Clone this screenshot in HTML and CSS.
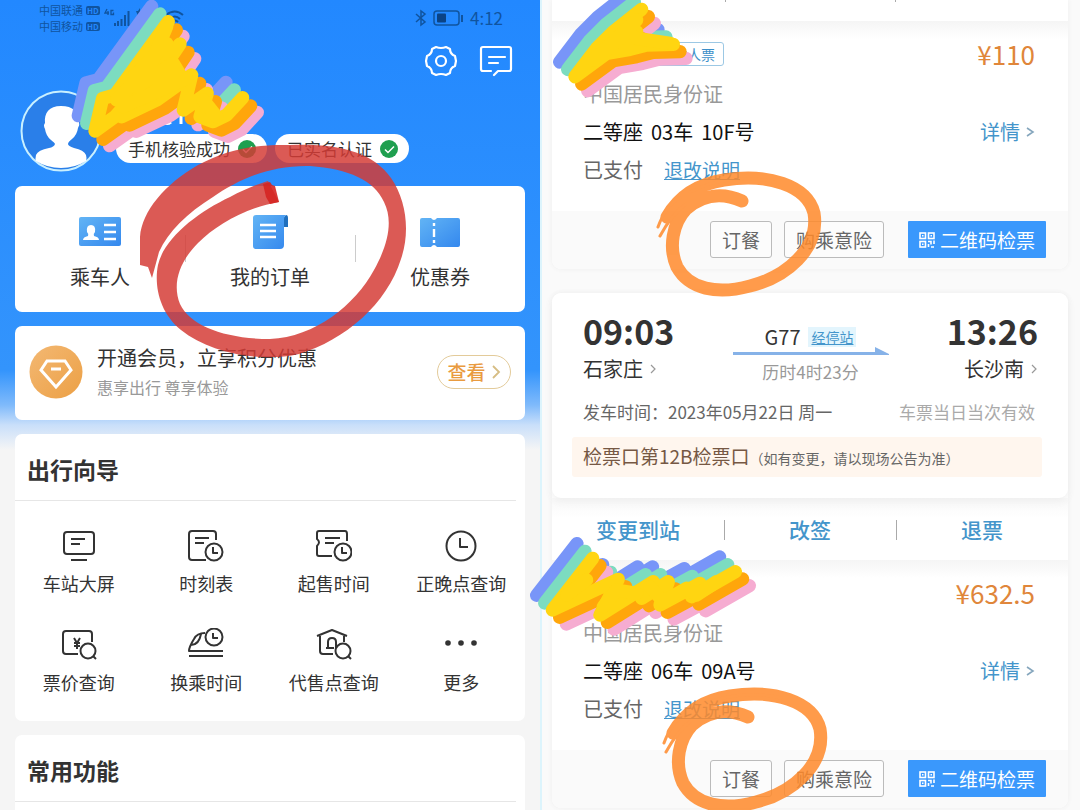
FILE: index.html
```html
<!DOCTYPE html>
<html lang="zh-CN">
<head>
<meta charset="utf-8">
<meta name="viewport" content="width=device-width, initial-scale=1">
<title>铁路订单订餐指引</title>
<link rel="stylesheet" href="styles.css">
</head>
<body>
<div class="page">
  <main class="account">
    <div class="status">
      <div class="carriers">
        <span>中国联通<b class="hd">HD</b></span>
        <span>中国移动<b class="hd">HD</b></span>
      </div>
      <svg class="signal" width="80" height="24" viewBox="0 0 80 24" aria-hidden="true">
        <g fill="none" stroke="#10549f" stroke-width="1.3"><path d="M3 7L1 11h4M4 9v4M9.500 8.500H7v4h2.500V10.500"/></g>
        <g fill="#10549f"><path d="M10 21h2v3h-2zM13 19h2v5h-2zM16.500 17h2v7h-2zM20 13h2v11h-2zM23.500 9h2v15h-2zM32 9h2l2-3v8h-2z"/></g>
        <g fill="none" stroke="#10549f" stroke-width="2"><path d="M62 13q9-7 17 0M65 17q6-5 11 0M68 20q3-3 6 0"/></g>
      </svg>
      <div class="status-right">
        <svg width="12" height="18" viewBox="0 0 12 18" aria-hidden="true"><path d="M1 5l9 8-4 3V2l4 3-9 8" fill="none" stroke="#10549f" stroke-width="1.500"/></svg>
        <svg width="31" height="18" viewBox="0 0 31 18" aria-hidden="true"><rect x="1" y="2" width="25" height="14" rx="3" fill="none" stroke="#10549f" stroke-width="1.500"/><rect x="4" y="4.500" width="9" height="9" rx="1" fill="#0b4385"/><path d="M29 6v7" stroke="#10549f" stroke-width="2"/></svg>
        <span>4:12</span>
      </div>
    </div>
    <div class="tools">
      <button class="plain" aria-label="设置">
        <svg width="32" height="32" viewBox="0 0 32 32"><g fill="none" stroke="#fff" stroke-width="2.200" stroke-linejoin="round"><path d="M11 2q5 2 10 0l4 2q0 5 5 7l1 5-1 5q-5 2-5 7l-4 2q-5-2-10 0l-4-2q0-5-5-7l-1-5 1-5q5-2 5-7z"/><circle cx="16" cy="16" r="5"/></g></svg>
      </button>
      <button class="plain" aria-label="消息">
        <svg width="34" height="32" viewBox="0 0 34 32"><g fill="none" stroke="#fff" stroke-width="2.200" stroke-linecap="round" stroke-linejoin="round"><path d="M12 26H4q-2 0-2-2V4q0-2 2-2h26q2 0 2 2v20q0 2-2 2H19l-4 4M10 12h16M10 18h9"/></g></svg>
      </button>
    </div>
    <div class="profile">
      <svg class="avatar" viewBox="0 0 82 82" role="img" aria-label="头像">
        <circle cx="41" cy="41" r="39.500" fill="#2a7fe9" stroke="#c9f0ff" stroke-width="2"/>
        <path d="M41 16c-12 0-17 7-16 17q-2 2 0 6 1 7 6 11 4 3 4 4-1 3-6 4-11 2-13 7-1 4 0 6Q27 78 41 78t25-7q1-3 0-6-2-5-12-7-6-2-6-4t4-5q5-4 6-11 2-3 1-6c0-10-6-16-18-16z" fill="#fff"/>
      </svg>
      <div class="identity">
        <svg width="34" height="12" viewBox="0 0 34 12" aria-hidden="true"><path d="M4 0q2 8-3 10M10 8q4 3 8 0M28 2v8" fill="none" stroke="#fff" stroke-width="3"/></svg>
        <div class="badges">
          <span class="badge">手机核验成功<svg width="18" height="18" viewBox="0 0 18 18"><circle cx="9" cy="9" r="9" fill="#1f9f4f"/><path d="M5 9.500l3 3 6-6" fill="none" stroke="#fff" stroke-width="1.500"/></svg></span>
          <span class="badge">已实名认证<svg width="18" height="18" viewBox="0 0 18 18"><circle cx="9" cy="9" r="9" fill="#1f9f4f"/><path d="M5 9.500l3 3 6-6" fill="none" stroke="#fff" stroke-width="1.500"/></svg></span>
        </div>
      </div>
    </div>

    <nav class="card quick">
      <a href="#passengers">
        <svg width="44" height="34" viewBox="0 0 44 34"><rect x="1" y="2" width="42" height="29" rx="2" fill="url(#blue)"/><path d="M5 25q0-3 5-4 1-2-1-4-1-7 4-7t4 7q-2 2-1 4 5 1 5 4z" fill="#fff"/><path d="M26 10h12M26 17h12M26 24h12" stroke="#fff" stroke-width="2.400"/></svg>
        <span>乘车人</span>
      </a>
      <a href="#orders">
        <svg width="38" height="34" viewBox="0 0 38 34"><path d="M35 0q2 0 2 3v9h-5V3z" fill="#1f6fbd"/><path d="M5 0h30q-2 1-2 4v26q0 4-4 4H5q-3 0-3-3V3q0-3 3-3z" fill="url(#blue)"/><path d="M9 10h16M9 16h16M9 22h16" stroke="#fff" stroke-width="2.400"/></svg>
        <span>我的订单</span>
      </a>
      <a href="#coupons">
        <svg width="42" height="34" viewBox="0 0 42 34"><path d="M3 3h9q3 4 6 0h21q2 0 2 2v25q0 2-2 2H18q-3-4-6 0H3q-2 0-2-2V5q0-2 2-2z" fill="url(#blue)"/><path d="M15 8v20" stroke="#fff" stroke-width="2.400" stroke-dasharray="3 3 8 3"/></svg>
        <span>优惠券</span>
      </a>
    </nav>

    <section class="card member">
      <svg width="54" height="54" viewBox="0 0 54 54" aria-hidden="true"><circle cx="27" cy="27" r="26.500" fill="url(#gold)"/><path d="M18 16h18l6 9-15 17-15-17zM22 24h10" fill="none" stroke="#fff" stroke-width="3"/></svg>
      <div class="member-text">
        <h2>开通会员，立享积分优惠</h2>
        <p>惠享出行 尊享体验</p>
      </div>
      <button class="view">查看<svg width="9" height="14" viewBox="0 0 9 14"><path d="M1 1l6 6-6 6" fill="none" stroke="#d6bd84" stroke-width="1.800"/></svg></button>
    </section>

    <section class="card">
      <h2 class="card-title">出行向导</h2>
      <nav class="guide">
        <a href="#screen"><svg width="36" height="34" viewBox="0 0 36 34"><rect x="3" y="3" width="30" height="22" rx="3"/><path d="M10 10h14M10 15h9M10 31h16"/></svg><span>车站大屏</span></a>
        <a href="#timetable"><svg width="36" height="34" viewBox="0 0 36 34"><path d="M28 11V5q0-3-3-3H4Q1 2 1 5v23q0 3 3 3h14M7 9h14M7 14h9"/><circle cx="26" cy="23" r="8.500"/><path d="M25 18v6h5"/></svg><span>时刻表</span></a>
        <a href="#sale"><svg width="36" height="34" viewBox="0 0 36 34"><path d="M31 12V5q0-3-2-3H3Q1 2 1 4v6q4 3 0 7v8q0 2 2 2h13M9 9h15M9 14h9"/><circle cx="27" cy="23" r="8.500"/><path d="M26 18v6h5"/></svg><span>起售时间</span></a>
        <a href="#delay"><svg width="36" height="34" viewBox="0 0 36 34"><circle cx="18" cy="17" r="14.500"/><path d="M17 9v9h8"/></svg><span>正晚点查询</span></a>
        <a href="#price"><svg width="36" height="34" viewBox="0 0 36 34"><path d="M31 14V6q0-3-3-3H5Q2 3 2 6v17q0 3 3 3h12M13 10l3 5 3-5M16 15v6M13 15h6M13 18h6"/><circle cx="27" cy="23" r="7.500"/><path d="M32 28l3 3"/></svg><span>票价查询</span></a>
        <a href="#transfer"><svg width="36" height="34" viewBox="0 0 36 34"><path d="M17 5Q9 5 6 11q-5 8-5 12h34M1 28h34M3 17q8 0 10-11"/><circle cx="26" cy="9" r="8.500"/><path d="M25 5v5h5"/></svg><span>换乘时间</span></a>
        <a href="#agency"><svg width="36" height="34" viewBox="0 0 36 34"><path d="M1 8l15-6 15 6M4 8v15q0 3 3 3h10M28 8v6M12 20v-6q0-4 4-4t4 4v6M10 20h8"/><circle cx="27" cy="23" r="7.500"/><path d="M32 28l3 3"/></svg><span>代售点查询</span></a>
        <a href="#more"><svg class="dots" width="36" height="34" viewBox="0 0 36 34"><circle cx="5" cy="15" r="2.800"/><circle cx="18" cy="15" r="2.800"/><circle cx="31" cy="15" r="2.800"/></svg><span>更多</span></a>
      </nav>
    </section>

    <section class="card common">
      <h2 class="card-title">常用功能</h2>
    </section>
  </main>

  <section class="orders">
    <article class="order first">
      <div class="sheet tail"><i></i><i></i></div>
      <div class="ticket">
        <div class="row top"><span class="chip">成人票</span><span class="price">¥110</span></div>
        <p class="idtype">中国居民身份证</p>
        <div class="row seat"><span class="place"><span>二等座</span><span>03车</span><span>10F号</span></span><a href="#detail1">详情<svg width="9" height="12" viewBox="0 0 9 12"><path d="M1 2l6 4-6 4" fill="none" stroke="#85a6bd" stroke-width="1.600"/></svg></a></div>
        <p class="paid">已支付<a href="#refund1">退改说明</a></p>
      </div>
      <div class="footer">
        <button class="ghost">订餐</button>
        <button class="ghost">购乘意险</button>
        <button class="solid"><svg width="16" height="16" viewBox="0 0 16 16"><g fill="none" stroke="#fff" stroke-width="1.600"><rect x="1" y="1" width="5.500" height="5.500"/><rect x="9.500" y="1" width="5.500" height="5.500"/><rect x="1" y="9.500" width="5.500" height="5.500"/><path d="M3 3.800h1.500M11.500 3.800H13M3 12.300h1.500M9 9.500h3v3M9.500 12v3M15 8.500V12M12 15h3"/></g></svg>二维码检票</button>
      </div>
    </article>

    <article class="order">
      <div class="sheet trip">
        <div class="journey">
          <div class="stop"><strong>09:03</strong><span>石家庄<svg width="7" height="10" viewBox="0 0 7 10"><path d="M1 1l4 4-4 4" fill="none" stroke="#999" stroke-width="1.200"/></svg></span></div>
          <div class="train">
            <div class="train-no">G77<a href="#stops">经停站</a></div>
            <svg class="arrow" viewBox="0 0 156 10" aria-hidden="true"><path d="M0 5h142V0l14 7v1H0z" fill="#86b2e8"/></svg>
            <span class="duration">历时4时23分</span>
          </div>
          <div class="stop end"><strong>13:26</strong><span>长沙南<svg width="7" height="10" viewBox="0 0 7 10"><path d="M1 1l4 4-4 4" fill="none" stroke="#999" stroke-width="1.200"/></svg></span></div>
        </div>
        <div class="row date"><span>发车时间：2023年05月22日 周一</span><span class="valid">车票当日当次有效</span></div>
        <p class="gate">检票口第12B检票口<small>（如有变更，请以现场公告为准）</small></p>
      </div>
      <div class="actions"><button class="plain">变更到站</button><button class="plain">改签</button><button class="plain">退票</button></div>
      <div class="ticket">
        <div class="row top"><span></span><span class="price">¥632.5</span></div>
        <p class="idtype">中国居民身份证</p>
        <div class="row seat"><span class="place"><span>二等座</span><span>06车</span><span>09A号</span></span><a href="#detail2">详情<svg width="9" height="12" viewBox="0 0 9 12"><path d="M1 2l6 4-6 4" fill="none" stroke="#85a6bd" stroke-width="1.600"/></svg></a></div>
        <p class="paid">已支付<a href="#refund2">退改说明</a></p>
      </div>
      <div class="footer">
        <button class="ghost">订餐</button>
        <button class="ghost">购乘意险</button>
        <button class="solid"><svg width="16" height="16" viewBox="0 0 16 16"><g fill="none" stroke="#fff" stroke-width="1.600"><rect x="1" y="1" width="5.500" height="5.500"/><rect x="9.500" y="1" width="5.500" height="5.500"/><rect x="1" y="9.500" width="5.500" height="5.500"/><path d="M3 3.800h1.500M11.500 3.800H13M3 12.300h1.500M9 9.500h3v3M9.500 12v3M15 8.500V12M12 15h3"/></g></svg>二维码检票</button>
      </div>
    </article>
  </section>

  <!-- hand-drawn marker rings and name-hiding scribbles -->
  <svg class="marks" viewBox="0 0 1080 810" aria-hidden="true">
    <defs>
      <linearGradient id="blue" x1="0" y1="0" x2="1" y2="1"><stop offset="0" stop-color="#62b4f5"/><stop offset="1" stop-color="#3488ee"/></linearGradient>
      <linearGradient id="gold" x1="0" y1="0" x2="1" y2="1"><stop offset="0" stop-color="#f3b873"/><stop offset="1" stop-color="#eca045"/></linearGradient>
      <path id="s1" d="M505 65L345 285 308 295 285 393 345 350 540 132 440 280 365 350 470 300 575 225 550 330 622 280 600 350 640 365 680 345 728 293"/>
      <path id="s2" d="M305 28L220 95 170 145 105 230 200 160 270 148 320 135 400 133M200 160L290 95"/>
      <path id="s3" d="M218 115L97 270 295 178 240 285 400 185 365 235 445 185 420 255 540 190 515 230 646 155"/>
      <g id="ring" fill="none" stroke="#ff8a2b" stroke-linecap="round">
        <path d="M667 217C678 198 697 184 724 180C767 173 807 185 814 213C820 249 786 277 750 286C717 295 689 289 677 267C668 247 673 223 686 209C702 195 722 192 742 201" stroke-width="13"/>
        <path d="M658 227Q666 205 680 198M660 236Q672 214 686 204M690 192Q730 172 775 182" stroke-width="3"/>
      </g>
    </defs>
    <path opacity=".84" fill="#d43a34" d="M140 265V237C142 211 165 184 198 165C228 149 258 144 290 145C338 143 373 152 391 178C407 201 410 233 401 259C387 304 345 340 299 354C260 363 210 353 181 330C159 312 154 285 158 265C164 238 198 212 230 197C245 189 258 184 268 181L279 202C247 207 216 225 198 243C179 262 172 284 180 304C190 326 226 339 270 339C315 337 355 305 374 270C389 243 393 220 384 202C374 180 349 169 310 166C269 165 238 180 213 197C187 213 168 232 159 252L152 278L148 267Z"/>
    <path fill="#d52522" opacity=".9" d="M263 184l7-2 2 3 3 1 4 16-9 2-4-7z"/>
    <g opacity=".85"><use href="#ring"/></g>
    <g opacity=".85"><use href="#ring" x="6" y="516"/></g>
    <g class="scribble" transform="scale(.3333)">
      <use href="#s1" x="-50" y="-46" stroke="#7895f8"/><use href="#s1" x="-25" y="-23" stroke="#7cdcc0"/><use href="#s1" x="44" y="44" stroke="#f6acd1"/><use href="#s1" x="24" y="25" stroke="#ffa60b"/><use href="#s1" stroke="#ffd511"/>
      <path stroke="#ffd511" d="M500 80L450 200 350 300M400 230L500 130M370 320L560 235M410 260L520 190 550 240M450 285L520 230M610 300L650 350"/>
    </g>
    <g class="scribble" transform="translate(540 0) scale(.3333)">
      <use href="#s2" x="-46" y="-44" stroke="#7895f8"/><use href="#s2" x="-22" y="-22" stroke="#7cdcc0"/><use href="#s2" x="38" y="42" stroke="#f6acd1"/><use href="#s2" x="20" y="22" stroke="#ffa60b"/><use href="#s2" stroke="#ffd511"/>
      <path stroke="#ffd511" d="M160 180L290 60M200 150L270 90M290 115L390 130"/>
    </g>
    <g class="scribble" transform="translate(520 520) scale(.3333)">
      <use href="#s3" x="-47" y="-44" stroke="#7895f8"/><use href="#s3" x="-23" y="-21" stroke="#7cdcc0"/><use href="#s3" x="42" y="42" stroke="#f6acd1"/><use href="#s3" x="22" y="22" stroke="#ffa60b"/><use href="#s3" stroke="#ffd511"/>
      <path stroke="#ffd511" d="M140 225L200 180M250 260L290 210 350 220M390 200L430 245 500 205 530 225 590 185"/>
    </g>
  </svg>
</div>
</body>
</html>
```

FILE: styles.css
```css
* { box-sizing: border-box; }
body, h2, p { margin: 0; }
body {
  font-family: "Noto Sans CJK SC", "Noto Sans", sans-serif;
  font-size: 20px;
  line-height: 30px;
  color: #333;
  height: 100vh;
  overflow: hidden;
  background: #f5f5f5;
}
a { color: inherit; text-decoration: none; }
button { font: inherit; cursor: pointer; }
svg { display: block; flex: none; }
.plain { background: none; border: 0; padding: 0; color: inherit; }
.page { position: relative; display: grid; grid-template-columns: 1fr 1fr; }

/* account screen */
.account {
  display: flex;
  flex-direction: column;
  gap: 14px;
  padding: 0 15px;
  background: linear-gradient(#2288ff 0, #3394fc 370px, #7fbafb 405px, #c9dffa 425px, #f5f5f5 450px);
}
.status { display: flex; align-items: flex-start; height: 31px; padding: 2px 22px 0 24px; color: #10549f; }
.carriers { display: flex; flex-direction: column; font-size: 11px; line-height: 16px; }
.carriers span { display: flex; align-items: center; gap: 3px; }
.hd { font-size: 8px; line-height: 9px; padding: 0 1px; border-radius: 2px; background: #10549f; color: #2288ff; }
.signal { margin-left: 4px; }
.status-right { display: flex; align-items: center; gap: 6px; margin-left: auto; padding: 1px 0; font-size: 17px; }
.tools { display: flex; justify-content: flex-end; gap: 22px; padding-right: 12px; }
.profile { display: flex; align-items: flex-end; gap: 15px; padding-left: 5px; margin-top: -1px; }
.avatar { width: 82px; height: 82px; }
.identity { padding-bottom: 9px; }
.identity > svg { margin: 0 0 8px 36px; }
.badges { display: flex; gap: 8px; margin-left: -1px; }
.badge { display: flex; align-items: center; gap: 8px; height: 29px; padding: 0 11px 0 12px; border-radius: 15px; background: #fff; font-size: 17px; }

.card { background: #fff; border-radius: 7px; }
.quick { display: grid; grid-template-columns: repeat(3, 1fr); padding: 29px 0 20px; }
.quick a { position: relative; display: flex; flex-direction: column; align-items: center; gap: 13px; }
.quick a + a::before { content: ""; position: absolute; left: 0; top: 20px; height: 27px; border-left: 1px solid #ccc; }
.member { display: flex; align-items: center; gap: 14px; padding: 17px 14px 19px; }
.member-text { flex: 1; }
.member h2 { font-size: 20px; font-weight: 400; line-height: 30px; }
.member p { font-size: 16px; line-height: 28px; color: #999; }
.view { display: flex; align-items: center; justify-content: center; gap: 6px; width: 74px; height: 34px; padding: 0; border: 1px solid #e3cb9a; border-radius: 17px; background: #fff; color: #e99b3f; font-size: 19px; font-weight: 500; }
.card-title { margin-right: 9px; padding: 20px 12px 15px; border-bottom: 1px solid #e6e6e6; font-size: 23px; line-height: 31px; font-weight: 700; }
.guide { display: grid; grid-template-columns: repeat(4, 1fr); row-gap: 31px; padding: 28px 0 25px; font-size: 18px; }
.guide a { display: flex; flex-direction: column; align-items: center; gap: 6px; line-height: 28px; }
.guide svg { fill: none; stroke: #333; stroke-width: 2; stroke-linejoin: round; }
.guide .dots { fill: #333; stroke: none; }
.common { padding-bottom: 40px; }

/* order list screen */
.orders { display: flex; flex-direction: column; gap: 24px; padding: 0 12px 0 10px; background: #fafafa; border-left: 2px solid #dcf4fc; }
.order { background: #fff; border-radius: 9px; box-shadow: 0 0 5px #eee; }
.order.first { border-radius: 0 0 9px 9px; }
.sheet { position: relative; background: #fff; border-radius: 9px; }
.tail { display: flex; justify-content: center; gap: 169px; height: 21px; border-radius: 0; }
.tail i { width: 1px; height: 2px; background: #aaa; }
.row { display: flex; justify-content: space-between; align-items: center; }
.ticket { padding: 14px 33px 21px 31px; background: linear-gradient(#f5f5f5, #fff 18px); }
.top { height: 38px; }
.chip { margin-left: 27px; padding: 0 8px 0 62px; border: 1px solid #9cc8e4; border-radius: 3px; font-size: 14px; line-height: 22px; color: #3c8fc9; }
.price { font-size: 26px; color: #e0863a; }
.idtype { color: #999; line-height: 42px; }
.seat { color: #111; line-height: 34px; }
.place { display: flex; gap: 8px; }
.seat a { display: flex; align-items: center; gap: 6px; color: #4495cb; }
.paid { color: #666; line-height: 41px; }
.paid a { margin-left: 21px; font-size: 19px; color: #4495cb; text-decoration: underline; }
.footer { display: flex; justify-content: flex-end; gap: 12px; padding: 10px 22px 11px; background: #fafafa; border-radius: 0 0 9px 9px; font-size: 19px; }
.footer button { height: 37px; line-height: 33px; padding: 0 11px; }
.ghost { background: #fcfcfc; border: 1px solid #bbb; border-radius: 3px; color: #666; }
.footer .solid { display: flex; align-items: center; gap: 5px; margin-left: 12px; border: 0; background: #3a98fc; color: #fff; border-radius: 1px; }

.trip { padding: 18px 26px 21px 20px; box-shadow: 0 3px 8px #eee; }
.journey { display: flex; justify-content: space-between; padding: 0 4px 0 11px; }
.stop { display: flex; flex-direction: column; }
.stop strong { font-size: 34px; line-height: 40px; }
.stop span { display: flex; align-items: center; gap: 7px; line-height: 36px; }
.stop.end { align-items: flex-end; }
.train { display: flex; flex-direction: column; align-items: center; padding-top: 11px; }
.train-no { display: flex; align-items: center; gap: 8px; height: 30px; }
.train-no a { padding: 0 3px; background: #e3f5fd; color: #4495cb; font-size: 14px; line-height: 20px; text-decoration: underline; }
.arrow { width: 156px; height: 10px; margin-top: -5px; }
.duration { font-size: 17px; line-height: 30px; color: #999; }
.date { padding: 0 7px 0 11px; font-size: 17px; line-height: 50px; color: #666; }
.valid { color: #aaa; }
.gate { padding: 0 11px; border-radius: 3px; background: #fff6ee; color: #765844; font-size: 19px; line-height: 38px; }
.gate small { font-size: 14px; color: #666; }
.actions { display: grid; grid-template-columns: repeat(3, 1fr); height: 62px; background: linear-gradient(#f8f8f8, #fff 20px); color: #4495cb; font-size: 21px; font-weight: 500; }
.actions button { position: relative; }
.actions button + button::before { content: ""; position: absolute; left: 0; top: 22px; height: 20px; border-left: 1px solid #aaa; }

.marks { position: absolute; left: 0; top: 0; width: 1080px; height: 810px; pointer-events: none; }
.scribble { fill: none; stroke-width: 40; stroke-linecap: round; stroke-linejoin: round; }
```
